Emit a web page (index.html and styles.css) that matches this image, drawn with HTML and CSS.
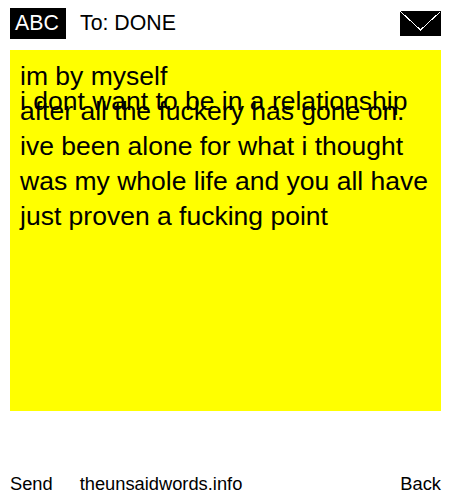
FILE: index.html
```html
<!DOCTYPE html>
<html lang="en">
<head>
    <meta charset="UTF-8">
    <title>theunsaidwords.info</title>
    <link rel="stylesheet" href="styles.css">
</head>
<body>
    <header class="top-bar">
        <div class="abc-badge">ABC</div>
        <div class="to-label">To: DONE</div>
        <svg class="envelope" width="41" height="25" viewBox="0 0 41 25" shape-rendering="crispEdges" aria-hidden="true">
            <rect width="41" height="25" fill="#000"/>
            <path d="M0.5 0.5 L20.5 19 L40.5 0.5" fill="none" stroke="#fff" stroke-width="1"/>
        </svg>
    </header>

    <div class="message">
        <div class="line-first">im by myself</div>
        <div class="line-tight">i dont want to be in a relationship</div>
        <div>after all the fuckery has gone on.</div>
        <div>ive been alone for what i thought</div>
        <div>was my whole life and you all have</div>
        <div>just proven a fucking point</div>
    </div>

    <footer class="bottom-bar">
        <a class="send">Send</a>
        <a class="site">theunsaidwords.info</a>
        <a class="back">Back</a>
    </footer>
</body>
</html>
```

FILE: styles.css
```css
body {
    margin: 0;
    padding: 0 9px 0 10px;
    height: 500px;
    box-sizing: border-box;
    overflow: hidden;
    background-color: #fff;
    color: #000;
    font-family: "Liberation Sans", Arial, sans-serif;
}

.top-bar {
    display: flex;
    align-items: center;
    height: 31px;
    padding-top: 8px;
    margin-bottom: 11px;
}

.abc-badge {
    width: 56px;
    height: 31px;
    box-sizing: border-box;
    padding-left: 5px;
    line-height: 31px;
    background-color: #000;
    color: #fff;
    font-size: 21.3px;
}

.to-label {
    margin-left: 14px;
    font-size: 21.3px;
}

.envelope {
    margin-left: auto;
}

.message {
    height: 361px;
    box-sizing: border-box;
    padding: 9px 10px;
    background-color: #ff0;
    font-size: 26.5px;
    line-height: 35px;
}

.line-first {
    height: 25px;
}

.line-tight {
    height: 10px;
}

.bottom-bar {
    display: flex;
    margin-top: 61px;
    font-size: 18.3px;
    line-height: 24px;
}

.site {
    margin-left: 27px;
}

.back {
    margin-left: auto;
}
```
